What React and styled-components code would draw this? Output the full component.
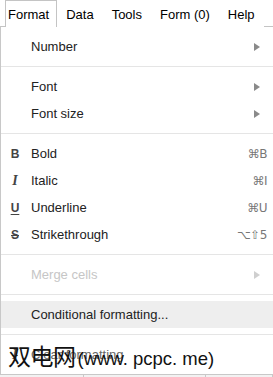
import React from "react";
import styled, { createGlobalStyle } from "styled-components";

const GlobalStyle = createGlobalStyle`
  html, body {
    margin: 0;
    padding: 0;
    background: #ffffff;
  }
  body {
    font-family: "Liberation Sans", Arial, sans-serif;
    overflow: hidden;
  }
`;

const tabs = ["Format", "Data", "Tools", "Form (0)", "Help"];

const App = () => {
  return (
    <Page>
      <GlobalStyle />
      <MenuBar>
        {tabs.map((t, i) => (
          <Tab key={t} $active={i === 0}>
            {t}
          </Tab>
        ))}
      </MenuBar>
      <Dropdown>
        <Item>
          <Label>Number</Label>
          <SubArrow />
        </Item>
        <Separator />
        <Item>
          <Label>Font</Label>
          <SubArrow />
        </Item>
        <Item>
          <Label>Font size</Label>
          <SubArrow />
        </Item>
        <Separator />
        <Item>
          <Icon $bold>B</Icon>
          <Label>Bold</Label>
          <Shortcut>⌘B</Shortcut>
        </Item>
        <Item>
          <Icon $italic>I</Icon>
          <Label>Italic</Label>
          <Shortcut>⌘I</Shortcut>
        </Item>
        <Item>
          <Icon $underline>U</Icon>
          <Label>Underline</Label>
          <Shortcut>⌘U</Shortcut>
        </Item>
        <Item>
          <Icon $strike>S</Icon>
          <Label>Strikethrough</Label>
          <Shortcut>⌥⇧5</Shortcut>
        </Item>
        <Separator />
        <Item>
          <Label $disabled>Merge cells</Label>
          <SubArrow $disabled />
        </Item>
        <Separator />
        <Item $hover>
          <Label>Conditional formatting...</Label>
        </Item>
        <Separator />
        <Item>
          <Icon $italic $strike>I</Icon>
          <Label $muted>Clear formatting</Label>
          <Watermark>
            <WmCjk>双电网</WmCjk>
            <WmLatin>(www. pcpc. me)</WmLatin>
          </Watermark>
        </Item>
      </Dropdown>
      <Sheet>
        <Cell $w={83} />
        <Cell $w={121} />
        <Cell />
      </Sheet>
    </Page>
  );
};

export default App;

const Page = styled.div`
  width: 273px;
  height: 377px;
  overflow: hidden;
  background: #ffffff;
  display: flex;
  flex-direction: column;
`;

const MenuBar = styled.div`
  display: flex;
  align-items: stretch;
  height: 26px;
  padding-left: 5px;
  font-size: 13px;
  color: #000;
`;

const Tab = styled.div`
  display: flex;
  align-items: center;
  white-space: nowrap;
  padding: ${(p) => (p.$active ? "1px 7px 0 2px" : "1px 8px 0 8px")};
  border: 1px solid ${(p) => (p.$active ? "#c4c4c4" : "transparent")};
  border-bottom: none;
  background: #fff;
  position: relative;
  z-index: 2;
  margin-bottom: ${(p) => (p.$active ? "-1px" : "0")};
  height: 27px;
  box-sizing: border-box;
`;

const Dropdown = styled.div`
  position: relative;
  width: 290px;
  border-top: 1px solid #c4c4c4;
  border-left: 1px solid #c8c8c8;
  border-bottom: 1px solid #c8c8c8;
  padding: 6px 0;
  background: #fff;
  font-size: 13px;
  color: #333;
  box-sizing: border-box;
`;

const Item = styled.div`
  position: relative;
  display: flex;
  align-items: center;
  height: 27px;
  padding: 0 24px 0 30px;
  width: 273px;
  box-sizing: border-box;
  background: ${(p) => (p.$hover ? "#eeeeee" : "transparent")};
  color: #222;
`;

const Label = styled.span`
  flex: 1;
  white-space: nowrap;
  color: ${(p) => (p.$disabled ? "#c6c6c6" : p.$muted ? "#666" : "#222")};
`;

const Icon = styled.span`
  position: absolute;
  left: 8px;
  width: 12px;
  text-align: center;
  color: #444;
  font-family: ${(p) =>
    p.$italic ? '"Liberation Serif", serif' : '"Liberation Sans", Arial, sans-serif'};
  font-weight: bold;
  font-style: ${(p) => (p.$italic ? "italic" : "normal")};
  font-size: ${(p) => (p.$italic ? "14px" : "12px")};
  text-decoration: ${(p) =>
    p.$underline ? "underline" : p.$strike ? "line-through" : "none"};
  text-decoration-thickness: 1px;
  text-underline-offset: 2px;
`;

const Shortcut = styled.span`
  margin-right: -17px;
  color: #777;
  font-family: "DejaVu Sans", "Liberation Sans", sans-serif;
  font-size: 12px;
  white-space: nowrap;
  letter-spacing: -0.5px;
`;

const SubArrow = styled.span`
  width: 0;
  height: 0;
  margin-right: -10px;
  border-top: 4px solid transparent;
  border-bottom: 4px solid transparent;
  border-left: 6px solid ${(p) => (p.$disabled ? "#cfcfcf" : "#8a8a8a")};
`;

const Separator = styled.div`
  height: 1px;
  margin: 6px 0;
  background: #e5e5e5;
`;

const Watermark = styled.span`
  position: absolute;
  left: 7px;
  top: -3px;
  display: flex;
  align-items: baseline;
  color: #111;
  white-space: nowrap;
`;

const WmCjk = styled.span`
  font-family: "Noto Sans CJK SC", sans-serif;
  font-size: 23px;
  letter-spacing: -0.5px;
`;

const WmLatin = styled.span`
  font-family: "Liberation Sans", Arial, sans-serif;
  font-size: 18.5px;
  margin-left: 2px;
`;

const Sheet = styled.div`
  flex: 1;
  display: flex;
  background: #f2f2f2;
`;

const Cell = styled.div`
  flex: ${(p) => (p.$w ? `0 0 ${p.$w}px` : "1")};
  border-right: 1px solid #c8c8c8;
`;
